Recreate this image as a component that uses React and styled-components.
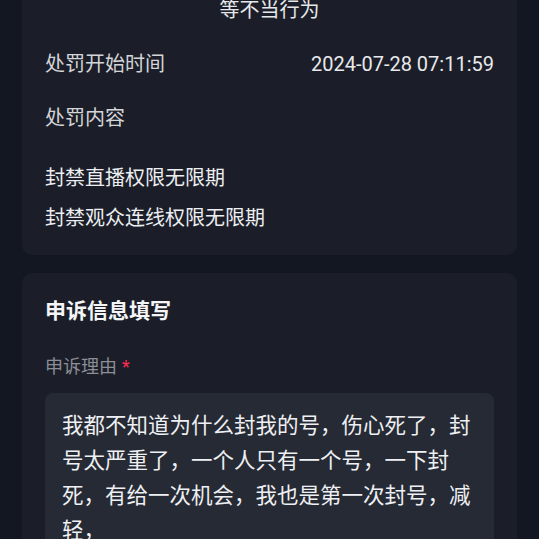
import React from "react";
import styled, { createGlobalStyle } from "styled-components";

const GlobalStyle = createGlobalStyle`
	html, body {
		margin: 0;
		padding: 0;
		background: #131721;
	}
	body {
		font-family: Roboto, "Noto Sans CJK SC", sans-serif;
		-webkit-font-smoothing: antialiased;
	}
`;

const Page = styled.div`
	height: 539px;
	overflow: hidden;
	padding: 0 22px;
	box-sizing: border-box;
	display: flex;
	flex-direction: column;
	gap: 18px;
`;

const Card = styled.section`
	background: #1b1e28;
	border-radius: 10px;
	padding: ${({ $top }) => $top || "24px"} 23px 23px;
	margin-top: ${({ $offset }) => $offset || "0"};
	display: flex;
	flex-direction: column;
`;

const Notice = styled.div`
	text-align: center;
	font-size: 20px;
	line-height: 28px;
	color: #e6e7ea;
`;

const InfoRow = styled.div`
	display: flex;
	justify-content: space-between;
	align-items: center;
	font-size: 20px;
	line-height: 28px;
	color: #d4d5d9;
	margin-top: ${({ $gap }) => $gap};
`;

const Value = styled.span`
	color: #e8e9ec;
`;

const PenaltyItem = styled.div`
	font-size: 20px;
	line-height: 28px;
	color: #eceef1;
	margin-top: ${({ $gap }) => $gap};
`;

const Title = styled.h2`
	margin: 0;
	font-size: 21px;
	line-height: 28px;
	font-weight: 700;
	color: #f4f5f7;
`;

const Label = styled.div`
	margin-top: 28px;
	font-size: 18px;
	line-height: 28px;
	color: #8b8e96;
`;

const Required = styled.span`
	color: #fe2c55;
	margin-left: 5px;
`;

const ReasonBox = styled.div`
	margin-top: 12px;
	background: #262a34;
	border-radius: 8px;
	padding: 15px 16px 20px 17px;
	font-size: 21.5px;
	line-height: 35px;
	color: #eef0f3;
	line-break: strict;
`;

export default function App() {
	return (
		<>
			<GlobalStyle />
			<Page>
				<Card $offset="-30px" $top="26px">
					<Notice>等不当行为</Notice>
					<InfoRow $gap="26px">
						<span>处罚开始时间</span>
						<Value>2024-07-28 07:11:59</Value>
					</InfoRow>
					<InfoRow $gap="26px">
						<span>处罚内容</span>
					</InfoRow>
					<PenaltyItem $gap="32px">封禁直播权限无限期</PenaltyItem>
					<PenaltyItem $gap="12px">封禁观众连线权限无限期</PenaltyItem>
				</Card>
				<Card>
					<Title>申诉信息填写</Title>
					<Label>
						申诉理由<Required>*</Required>
					</Label>
					<ReasonBox>
						我都不知道为什么封我的号，伤心死了，封号太严重了，一个人只有一个号，一下封死，有给一次机会，我也是第一次封号，减轻，
					</ReasonBox>
				</Card>
			</Page>
		</>
	);
}
